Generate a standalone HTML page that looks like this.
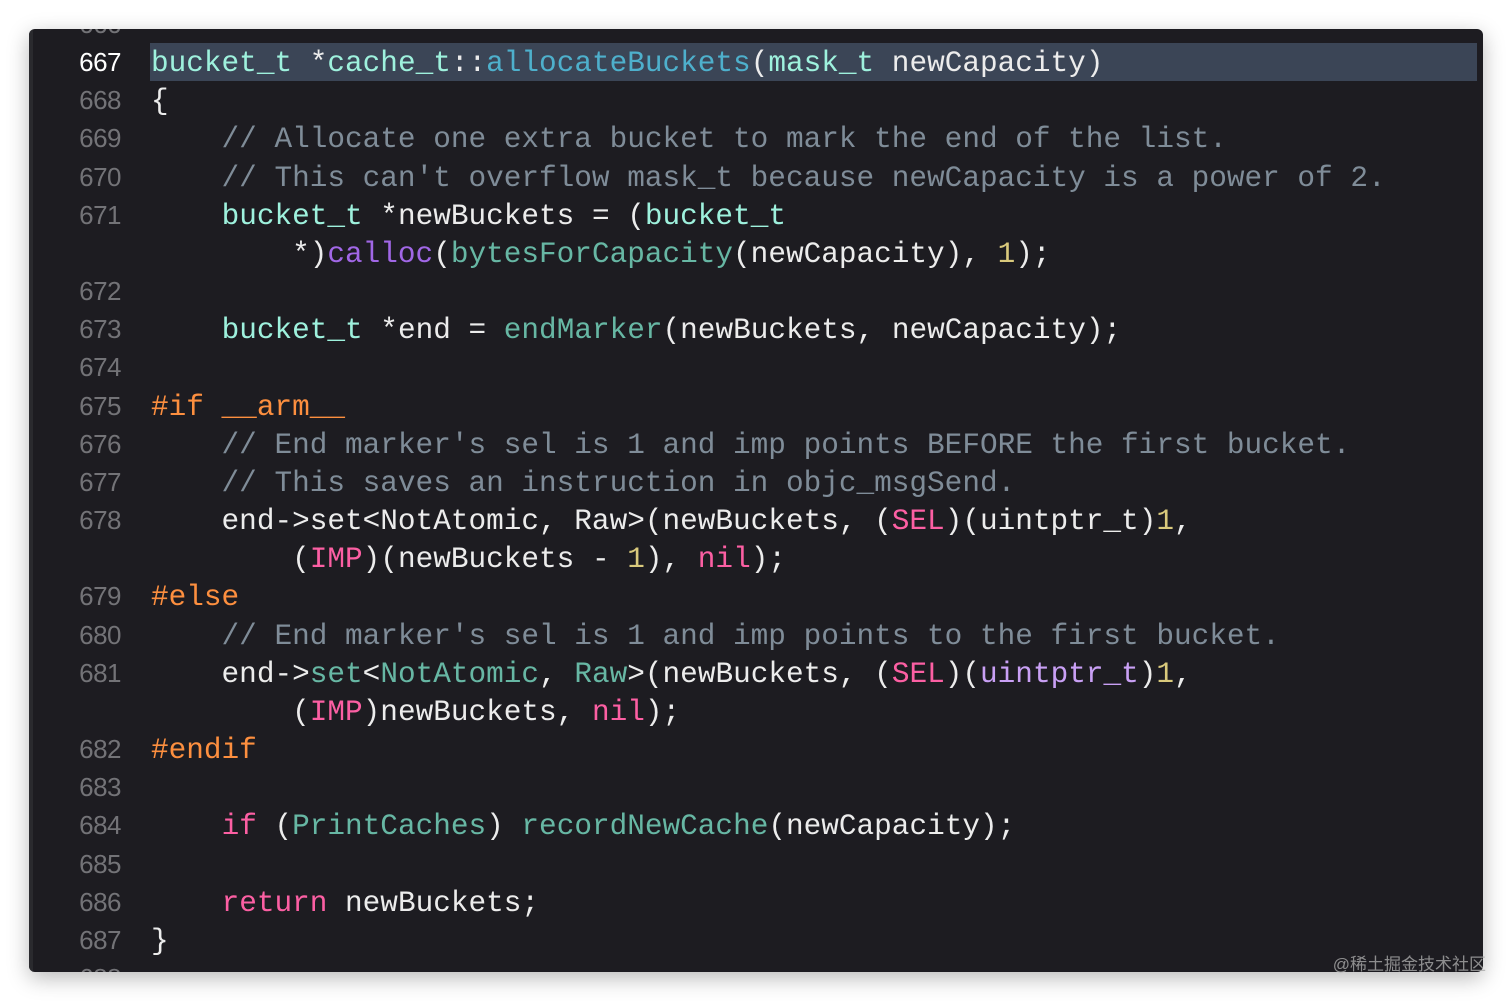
<!DOCTYPE html>
<html><head><meta charset="utf-8"><style>
html,body{margin:0;padding:0;background:#fff;width:1512px;height:1001px;overflow:hidden}
.win{position:absolute;left:29px;top:29px;width:1454px;height:943px;background:#1d1c21;border-radius:6px;overflow:hidden;box-shadow:0 6px 22px rgba(0,0,0,0.28)}
.win:before{content:"";position:absolute;left:0;top:0;bottom:0;width:4px;background:#2a2a2e}
.hl{position:absolute;left:121px;top:14px;width:1327px;height:38px;background:#3b4556}
.row{position:absolute;left:0;height:38px;line-height:38px;width:1454px;white-space:pre}
.n{position:absolute;top:0;right:1362px;font-family:"Liberation Sans",sans-serif;font-size:26px;color:#737377;letter-spacing:-0.5px}
.c{position:absolute;top:2px;left:122px;font-family:"Liberation Mono",monospace;font-size:29.4px;color:#ececec}
.t{color:#9ef1dd}.f{color:#67b7a4}.d{color:#4eb0cc}.p{color:#a167e6}.num{color:#d9c97c}.k{color:#fc5fa3}.pp{color:#fd8f3f}.cm{color:#7f8c98}.u{color:#c9a0f5}
.wm{position:absolute;right:26px;top:950px;font-family:"Liberation Sans","Noto Sans CJK SC",sans-serif;font-size:17px;color:#aaa;opacity:.8}
</style></head><body>
<div class="win">
<div class="hl"></div>
<div class="row" style="top:-24px"><span class="n">666</span></div>
<div class="row" style="top:14px"><span class="n" style="color:#fff">667</span><span class="c"><span class="t">bucket_t</span> *<span class="t">cache_t</span>::<span class="d">allocateBuckets</span>(<span class="t">mask_t</span> newCapacity)</span></div>
<div class="row" style="top:52.2px"><span class="n">668</span><span class="c">{</span></div>
<div class="row" style="top:90.3px"><span class="n">669</span><span class="c cm">    // Allocate one extra bucket to mark the end of the list.</span></div>
<div class="row" style="top:128.5px"><span class="n">670</span><span class="c cm">    // This can't overflow mask_t because newCapacity is a power of 2.</span></div>
<div class="row" style="top:166.7px"><span class="n">671</span><span class="c">    <span class="t">bucket_t</span> *newBuckets = (<span class="t">bucket_t</span></span></div>
<div class="row" style="top:204.9px"><span class="c">        *)<span class="p">calloc</span>(<span class="f">bytesForCapacity</span>(newCapacity), <span class="num">1</span>);</span></div>
<div class="row" style="top:243px"><span class="n">672</span></div>
<div class="row" style="top:281.2px"><span class="n">673</span><span class="c">    <span class="t">bucket_t</span> *end = <span class="f">endMarker</span>(newBuckets, newCapacity);</span></div>
<div class="row" style="top:319.4px"><span class="n">674</span></div>
<div class="row" style="top:357.5px"><span class="n">675</span><span class="c pp">#if __arm__</span></div>
<div class="row" style="top:395.7px"><span class="n">676</span><span class="c cm">    // End marker's sel is 1 and imp points BEFORE the first bucket.</span></div>
<div class="row" style="top:433.9px"><span class="n">677</span><span class="c cm">    // This saves an instruction in objc_msgSend.</span></div>
<div class="row" style="top:472px"><span class="n">678</span><span class="c">    end-&gt;set&lt;NotAtomic, Raw&gt;(newBuckets, (<span class="k">SEL</span>)(uintptr_t)<span class="num">1</span>,</span></div>
<div class="row" style="top:510.2px"><span class="c">        (<span class="k">IMP</span>)(newBuckets - <span class="num">1</span>), <span class="k">nil</span>);</span></div>
<div class="row" style="top:548.4px"><span class="n">679</span><span class="c pp">#else</span></div>
<div class="row" style="top:586.6px"><span class="n">680</span><span class="c cm">    // End marker's sel is 1 and imp points to the first bucket.</span></div>
<div class="row" style="top:624.7px"><span class="n">681</span><span class="c">    end-&gt;<span class="f">set</span>&lt;<span class="f">NotAtomic</span>, <span class="f">Raw</span>&gt;(newBuckets, (<span class="k">SEL</span>)(<span class="u">uintptr_t</span>)<span class="num">1</span>,</span></div>
<div class="row" style="top:662.9px"><span class="c">        (<span class="k">IMP</span>)newBuckets, <span class="k">nil</span>);</span></div>
<div class="row" style="top:701.1px"><span class="n">682</span><span class="c pp">#endif</span></div>
<div class="row" style="top:739.2px"><span class="n">683</span></div>
<div class="row" style="top:777.4px"><span class="n">684</span><span class="c">    <span class="k">if</span> (<span class="f">PrintCaches</span>) <span class="f">recordNewCache</span>(newCapacity);</span></div>
<div class="row" style="top:815.6px"><span class="n">685</span></div>
<div class="row" style="top:853.7px"><span class="n">686</span><span class="c">    <span class="k">return</span> newBuckets;</span></div>
<div class="row" style="top:891.9px"><span class="n">687</span><span class="c">}</span></div>
<div class="row" style="top:930.1px"><span class="n">688</span></div>
</div>
<div class="wm">@稀土掘金技术社区</div>
</body></html>
